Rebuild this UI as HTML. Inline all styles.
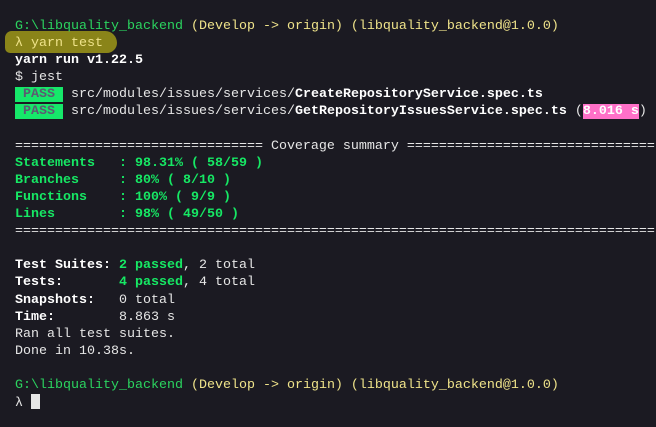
<!DOCTYPE html>
<html><head><meta charset="utf-8"><style>
html,body{margin:0;padding:0;}
body{width:656px;height:427px;background:#1b1a22;overflow:hidden;position:relative;}
.t{position:absolute;left:15px;top:18px;font-family:"Liberation Mono",monospace;font-size:13.33px;line-height:17.1px;white-space:pre;color:#e6e6e6;}
.g{color:#2bd35f}.y{color:#efe38a}.b{font-weight:bold;color:#fff}
.gb{font-weight:bold;color:#16e864}
.pass{background:#16e86a;color:#5d5a72;font-weight:bold;}
.pk{background:#ff70c8;color:#fff;font-weight:bold;}
.hl{position:absolute;left:5px;top:31px;width:112px;height:22px;background:#8a8419;border-radius:8px 14px 12px 6px;}
.cur{display:inline-block;width:9px;height:15px;background:#e6e6e6;vertical-align:-3px;}
</style></head><body>
<div class="hl"></div>
<div class="t"><span class="g">G:\libquality_backend</span> <span class="y">(Develop -&gt; origin) (libquality_backend@1.0.0)</span>
<span class="y">λ yarn test</span>
<span class="b">yarn run v1.22.5</span>
$ jest
<span class="pass"> PASS </span> src/modules/issues/services/<span class="b">CreateRepositoryService.spec.ts</span>
<span class="pass"> PASS </span> src/modules/issues/services/<span class="b">GetRepositoryIssuesService.spec.ts</span> (<span class="pk">8.016 s</span>)

=============================== Coverage summary ===============================
<span class="gb">Statements   : 98.31% ( 58/59 )</span>
<span class="gb">Branches     : 80% ( 8/10 )</span>
<span class="gb">Functions    : 100% ( 9/9 )</span>
<span class="gb">Lines        : 98% ( 49/50 )</span>
================================================================================

<span class="b">Test Suites: </span><span class="gb">2 passed</span>, 2 total
<span class="b">Tests:       </span><span class="gb">4 passed</span>, 4 total
<span class="b">Snapshots:   </span>0 total
<span class="b">Time:        </span>8.863 s
Ran all test suites.
Done in 10.38s.

<span class="g">G:\libquality_backend</span> <span class="y">(Develop -&gt; origin) (libquality_backend@1.0.0)</span>
λ <span class="cur"></span></div>
</body></html>
